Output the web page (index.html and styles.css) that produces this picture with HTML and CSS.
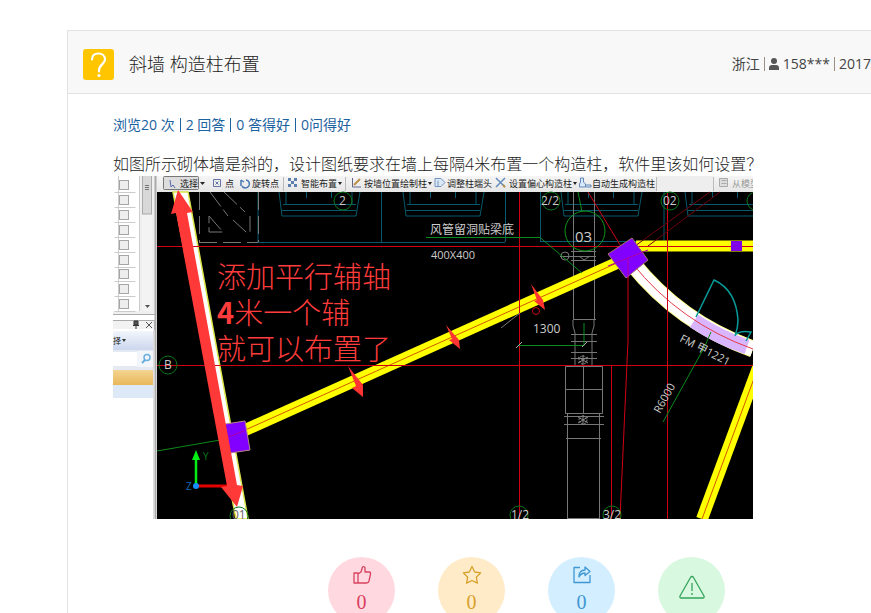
FILE: index.html
```html
<!DOCTYPE html>
<html lang="zh-CN">
<head>
<meta charset="utf-8">
<title>斜墙 构造柱布置</title>
<link rel="stylesheet" href="styles.css">
</head>
<body>
<main class="card">
  <header class="head">
    <svg class="badge" viewBox="0 0 31 31" aria-hidden="true">
      <rect width="31" height="31" rx="3" fill="#ffc600"/>
      <path d="M9 10.500C9 6.500 11.500 4.500 15.500 4.500S22 7 22 10.500C22 15 16 15.500 16 21.500V22.500" fill="none" stroke="#fff" stroke-width="2.200" stroke-linecap="round"/>
      <circle cx="16" cy="26.500" r="1.500" fill="#fff"/>
    </svg>
    <h1 class="title">斜墙 构造柱布置</h1>
    <div class="meta">
      <span>浙江</span><i class="bar"></i>
      <svg class="user" viewBox="0 0 10 12" aria-hidden="true"><circle cx="5" cy="3" r="3" fill="#555"/><path d="M0 12V10Q0 7 3 7H7Q10 7 10 10V12Z" fill="#555"/></svg>
      <span>158***</span><i class="bar"></i><span>2017</span>
    </div>
  </header>
  <section class="body">
    <div class="stats">
      <span>浏览20 次</span><i class="bar"></i><span>2 回答</span><i class="bar"></i><span>0 答得好</span><i class="bar"></i><span>0问得好</span>
    </div>
    <p class="question">如图所示砌体墙是斜的，设计图纸要求在墙上每隔4米布置一个构造柱，软件里该如何设置？</p>
    <svg class="drawing" viewBox="113 176 640 343" role="img" aria-label="构造柱布置图">
      <defs>
        <linearGradient id="tool" x1="0" y1="0" x2="0" y2="1"><stop offset="0" stop-color="#f5f5f5"/><stop offset="1" stop-color="#e6e6e6"/></linearGradient>
        <linearGradient id="gold" x1="0" y1="0" x2="0" y2="1"><stop offset="0" stop-color="#f3d491"/><stop offset="1" stop-color="#e9b75b"/></linearGradient>
        <linearGradient id="blue" x1="0" y1="0" x2="0" y2="1"><stop offset="0" stop-color="#f2f6fc"/><stop offset="1" stop-color="#ccd7ee"/></linearGradient>
        <g id="tick"><rect width="9" height="9" fill="#eee" stroke="#a5a5a5"/><path d="M-5 12H16" stroke="#ccc"/></g>
        <g id="bay" fill="none" stroke="#075a6c">
          <path d="M0 192 3 216H77L81 192M7 192V205M73 192V205M4 204.500H77M3 210.500H77M27.500 192V198M52.500 192V198"/>
        </g>
        <path id="dart" d="M0 0 15 19V31L4 22 8 20Z" fill="#ff3432"/>
        <g id="knot" fill="none" stroke="#888"><circle r="4" stroke-dasharray="2 1"/><path d="M-5 -3 5 3M-5 3 5 -3M0 -5V5"/></g>
      </defs>
      <rect x="113" y="176" width="640" height="343" fill="#fff"/>

      <g class="panel">
        <path d="M113 176h44v139h-44z" fill="#efefef"/>
        <path d="M113 176h26v135h-26z" fill="#fff"/>
        <path d="M118.500 176V311M139.500 176V311" stroke="#ccc"/>
        <rect x="142" y="176" width="10" height="135" fill="#f3f3f3"/>
        <rect x="142.500" y="174" width="9" height="40" fill="#d8d8d8" stroke="#aaa"/>
        <path d="M145 185.500h4M145 187.500h4M145 189.500h4" stroke="#777"/>
        <path d="M145 305h5l-2.500 3z" fill="#555"/>
        <use href="#tick" x="119.500" y="180.500"/><use href="#tick" x="119.500" y="195.500"/><use href="#tick" x="119.500" y="210.500"/><use href="#tick" x="119.500" y="225.500"/><use href="#tick" x="119.500" y="240.500"/><use href="#tick" x="119.500" y="255.500"/><use href="#tick" x="119.500" y="269.500"/><use href="#tick" x="119.500" y="284.500"/><use href="#tick" x="119.500" y="299.500"/>
        <path d="M113 314.500H155M113 320.500H154.500V330" fill="none" stroke="#aaa"/>
        <rect x="113" y="321" width="41" height="8" fill="#f2f2f2"/>
        <path d="M134 321h4v4h-4zM133 325.500h6M136 325v4" fill="#555" stroke="#333"/>
        <path d="m146 322 6 6m0-6-6 6" stroke="#555"/>
        <rect x="113" y="331" width="41" height="19" fill="url(#blue)"/>
        <text x="113" y="344" font-size="8" fill="#222">择</text><path d="M122 339h4l-2 3z" fill="#333"/>
        <rect x="113" y="350" width="41" height="20" fill="#e5e9f1"/>
        <rect x="113" y="352" width="24" height="14" fill="#fff"/>
        <rect x="137" y="351" width="16" height="16" fill="#f2f5fa"/>
        <circle cx="147" cy="357.500" r="3" fill="none" stroke="#6aaede" stroke-width="1.500"/><path d="m145 360-3 3" stroke="#6aaede" stroke-width="2"/>
        <rect x="113" y="370" width="40" height="15" fill="url(#gold)"/>
        <rect x="113" y="385" width="40" height="13" fill="#dde9f7"/>
        <path d="M153.500 330V519" stroke="#ddd"/><path d="M155.500 176V519" stroke="#aaa" stroke-width="2"/>
      </g>

      <g class="toolbar" font-size="9" fill="#222">
        <rect x="157" y="176" width="596" height="16" fill="url(#tool)"/>
        <path d="M657 176h56v16h-56z" fill="#eee"/>
        <rect x="163.500" y="176.500" width="35" height="13" rx="1" fill="#ddd" stroke="#777"/>
        <path d="m170 180 1 7 2-2 2 3" fill="none" stroke="#5268a8"/>
        <text x="180" y="187">选择</text><path d="M200 182h5l-2.500 3z"/>
        <path d="M213.500 179.500h7v7h-7zm2 2 3 3m0-3-3 3" fill="none" stroke="#6574a6"/><text x="225" y="187">点</text>
        <path d="M241 180v6m0-6 3 2m-2 4a4 4 0 1 0 4-6" fill="none" stroke="#4577b0" stroke-width="1.500"/><text x="252" y="187">旋转点</text>
        <path d="M283.500 177V191M345.500 177V191M656.500 177V191M713.500 177V191" stroke="#bbb"/>
        <path d="M288 178h3v3h-3zm6 0h3v3h-3zm-6 6h3v3h-3zm6 0h3v3h-3zM291 181h3v3h-3z" fill="#5d7fae"/><text x="301" y="187">智能布置</text><path d="M338 182h4l-2 3z"/>
        <path d="M352.500 178V187H361" fill="none" stroke="#668"/><path d="m354 185 6-6" stroke="#ba9146" stroke-width="2"/><text x="364" y="187">按墙位置绘制柱</text><path d="M428 182h4l-2 3z"/>
        <path d="M435 178.500h6l4 4-4 4h-6zm3 2v6" fill="#dce9f8" stroke="#7394c1"/><text x="447" y="187">调整柱端头</text>
        <path d="m496 178 9 9m0-9-9 9" stroke="#638cbd" stroke-width="1.500"/><path d="m503 185 2 2" stroke="#b99145" stroke-width="2"/><text x="509" y="187">设置偏心构造柱</text><path d="M573 182h4l-2 3z"/>
        <path d="M580.500 178h3v4l2 2v3h-6v-3l1-2zM586 185h5v2h-5" fill="#d8eaff" stroke="#6487b5"/><text x="592" y="187">自动生成构造柱</text>
        <path d="M719.500 178.500h8v8h-8zm2 2h5m-5 3h5" fill="#ddd" stroke="#aaa"/><text x="732" y="187" fill="#999">从模型</text>
      </g>

      <rect x="157" y="192" width="596" height="327" fill="#000"/>
      <g class="rooms" fill="none" stroke="#075a6c">
        <use href="#bay" x="279"/><use href="#bay" x="403"/><use href="#bay" x="561"/><use href="#bay" x="685"/>
        <path d="M258 192V242.500H505M381.500 192V242M505.500 192V242M540.500 192V242M540 241.500H664V192"/>
      </g>
      <path d="M199.500 192V242M258.500 192V242M199 242.500H258" fill="none" stroke="#777" stroke-dasharray="18 6"/>
      <path d="m210 192 18 24M224 192l21 20m-36 4 14 16h-14zm24 4 13 12h4V216" fill="none" stroke="#777" stroke-dasharray="18 4"/>

      <g class="pipes" fill="none" stroke="#777">
        <path d="M573.500 192V320M594.500 192V320M571 251.500H596M571 260.500H596M571 256.500H596M573 319.500H596M573 320V326L575 333V366M594 320V326L592 333V366M571 334.500H597M571 341.500H597M571 352.500H597M571 358.500H597M579 256l5 4 6-4"/>
        <path d="M565.500 366.500h37v47h-37zM583.500 366V413M565 389.500H602M564 416.500H604M564 424.500H604M567.500 414V519M599.500 414V519M566 438.500H601M567 518.500H600"/>
        <circle cx="565" cy="256" r="4"/><path d="M560 256.500H595"/>
      </g>
      <use href="#knot" x="583" y="360"/><use href="#knot" x="583" y="420"/>

      <path d="M173 192 236 519H248L188 192Z" fill="#fff" stroke="#dce64a" stroke-width="1.500"/>
      <path d="M243 431 628 258" stroke="#ff0" stroke-width="12"/>
      <path d="M243 431 628 258" stroke="#d05a00"/>
      <path d="M636 246H753" stroke="#ff0" stroke-width="11"/>
      <path d="M759 365 702 519" stroke="#ff0" stroke-width="12"/><path d="M759 365 702 519" stroke="#d05a00"/>
      <path d="M632 263Q680 323 753 349" fill="none" stroke="#ff8" stroke-width="17"/>
      <path d="M632 263Q680 323 753 349" fill="none" stroke="#fff" stroke-width="15"/>
      <path d="M694 321Q720 338 747 347" fill="none" stroke="#dab5ff" stroke-width="15"/>
      <path d="M632 263Q680 323 753 349" fill="none" stroke="#e43b49"/>
      <path d="m696 317 18-37q22 10 24 40 0 8-3 16M735 335q5-5 16-3l-5 9" fill="none" stroke="#079b99" stroke-width="1.500"/>

      <g class="axes" fill="none" stroke="#d00014">
        <path d="M157 246.500H753M157 365.500H753M519.500 192V519M667.500 192V519M611.500 366V519"/>
        <path d="M588 192 628 258V340L620 519"/>
        <path d="M628 251 710 192M648 246 720 192" stroke="#700010"/>
        <circle cx="536" cy="311" r="3.500"/>
      </g>
      <path d="m501 328 19-15" stroke="#777"/>
      <g class="marks" fill="none" stroke="#087718">
        <circle cx="343" cy="201" r="9"/><circle cx="551" cy="201" r="9"/><circle cx="670" cy="201" r="9"/><circle cx="756" cy="201" r="9"/>
        <circle cx="585" cy="231" r="20" stroke="#0b9418"/><path d="m578 192 4 20M426 237.500H540L582 273M519 345.500H584V323M157 451 226 439M663 422l42-76 6-14" stroke="#0b8a1c"/>
        <circle cx="168" cy="365" r="9"/><circle cx="239" cy="516" r="9"/><circle cx="519" cy="515" r="9"/><circle cx="612" cy="515" r="9"/>
      </g>
      <path d="m516 348 6-6m60 5 5-5" stroke="#aaa"/>
      <path d="m632 238 16 22-22 18-18-24Z" fill="#8200ff" stroke="#a77470"/>
      <path d="m608 266 40-16M628 258V278" stroke="#b000a0"/>
      <path d="M731 241h11v10h-11z" fill="#8000e8"/>
      <path d="m219 425 26-4 5 29-26 4z" fill="#8200ff" stroke="#b88888"/>
      <path d="m226 438 18-7" stroke="#b000a0"/>

      <g class="labels" fill="#ccc" font-size="12">
        <text x="339" y="205">2</text><text x="541" y="205">2/2</text><text x="663" y="205">02</text>
        <text x="575" y="242" font-size="15">03</text>
        <text x="430" y="234">风管留洞贴梁底</text><text x="431" y="259" font-size="11">400X400</text>
        <text x="533" y="333">1300</text><text x="164" y="369">B</text>
        <text x="232" y="519" fill="#666">01</text><text x="511" y="519">1/2</text><text x="603" y="519">3/2</text>
        <text transform="translate(679 341) rotate(27)" font-size="11">FM 甲1221</text>
        <text transform="translate(660 414) rotate(-61)" font-size="11">R6000</text>
      </g>
      <path d="M196 486V456" stroke="#00ed16" stroke-width="2.500"/><path d="m196 450 4 10h-8z" fill="#00ed16"/>
      <path d="M196 486H230" stroke="#e60000" stroke-width="3"/><circle cx="196" cy="486" r="3" fill="#158fff"/>
      <text x="186" y="490" font-size="10" fill="#1769b2">Z</text><text x="203" y="460" font-size="10" fill="#087718">Y</text>

      <path d="M178 190 193 212 187 213 237 485 243 486 237 507 221 487 227 486 176 213 171 214Z" fill="#ff3838"/>
      <use href="#dart" x="348" y="366"/>
      <path d="m446 325 13 15 1 9-11-9 3-1zM531 284l12 16 2 10-11-9 3-1z" fill="#ff3432"/>
      <g class="notes">
        <text x="217" y="288">添加平行辅轴</text>
        <text x="217" y="324"><tspan class="digit">4</tspan>米一个辅</text>
        <text x="217" y="360">就可以布置了</text>
      </g>
    </svg>
  </section>
  <div class="actions">
    <button class="act like" type="button" aria-label="点赞">
      <svg class="icon" viewBox="0 0 20 20"><path d="M2 8h4v10H2zM6 9l3-2 1.500-5q2-1 2.500 1v4h4q2 0 1.500 2l-1.500 7q-.5 2-2.500 2H6"/></svg><span>0</span>
    </button>
    <button class="act star" type="button" aria-label="收藏">
      <svg class="icon" viewBox="0 0 20 20"><path d="m10 1.500 2.700 5.500 6 .9-4.400 4.300 1.100 6L10 15.500l-5.400 2.700 1.100-6L1.300 7.900l6-.9z"/></svg><span>0</span>
    </button>
    <button class="act share" type="button" aria-label="分享">
      <svg class="icon" viewBox="0 0 20 20"><path d="M8 2.500H2V17.500H18V10M7 12q0-7 6-7V2l5 4.500-5 4V8q-4 0-6 4z"/></svg><span>0</span>
    </button>
    <button class="act report" type="button" aria-label="举报">
      <svg class="icon large" viewBox="0 0 28 28"><path d="M14 3.500q1 0 1.500 1L26 23q.5 2-1 2H3q-1.500 0-1-2L12.500 4.500q.5-1 1.500-1zM14 10v8M14 20v2"/></svg>
    </button>
  </div>
</main>
</body>
</html>
```
FILE: styles.css
```css
* { box-sizing: border-box; }
body {
  margin: 0;
  height: 100vh;
  overflow: hidden;
  background: #fff;
  color: #222;
  font-family: "Open Sans", "Noto Sans CJK SC", sans-serif;
}
.card {
  margin: 30px 0 0 67px;
  border: 1px solid #e3e3e3;
  border-right: 0;
  min-height: 100vh;
}
.head {
  display: flex;
  align-items: center;
  height: 63px;
  padding-left: 15px;
  padding-top: 4px;
  background: #f8f8f8;
  border-bottom: 1px solid #e3e3e3;
  white-space: nowrap;
  overflow: hidden;
}
.badge { width: 31px; height: 31px; flex: none; }
.title {
  margin: 0 auto 0 15px;
  font-size: 18px;
  line-height: 28px;
  font-weight: 300;
}
.meta,
.stats {
  display: flex;
  align-items: center;
  font-size: 14px;
  line-height: 22px;
}
.meta { color: #444; }
.stats { color: #1b62a0; }
.bar {
  width: 1px;
  height: 14px;
  margin: 0 5px;
  background: currentColor;
}
.meta .bar { margin: 0 4px; background: #9a9080; }
.user { width: 10px; height: 12px; margin-right: 4px; }
.body { padding: 20px 0 0 45px; }
.question {
  margin: 16px 0 0;
  font-size: 16px;
  line-height: 24px;
  font-weight: 300;
  white-space: nowrap;
}
.drawing {
  display: block;
  width: 640px;
  max-width: 100%;
  height: auto;
}
.notes {
  font-family: "Noto Sans CJK SC", sans-serif;
  font-size: 29px;
  font-weight: 300;
  fill: #ff3c3c;
}
.digit { font-weight: 700; }
.actions {
  display: flex;
  gap: 43px;
  padding: 38px 0 0 260px;
}
.act {
  display: flex;
  flex: none;
  flex-direction: column;
  align-items: center;
  width: 67px;
  height: 67px;
  padding: 8px 0 0;
  border: 0;
  border-radius: 50%;
  font: 20px/28px "Liberation Serif", serif;
}
.icon {
  width: 20px;
  height: 20px;
  margin-bottom: 3px;
  fill: none;
  stroke: currentColor;
  stroke-width: 1.3;
  stroke-linejoin: round;
}
.large { width: 28px; height: 28px; margin-top: 8px; }
.like { background: #ffd9df; color: #d9405f; }
.star { background: #ffebc8; color: #d9a02c; }
.share { background: #d3eeff; color: #3f97d3; }
.report { background: #d9f8e0; color: #35a35b; }
```
